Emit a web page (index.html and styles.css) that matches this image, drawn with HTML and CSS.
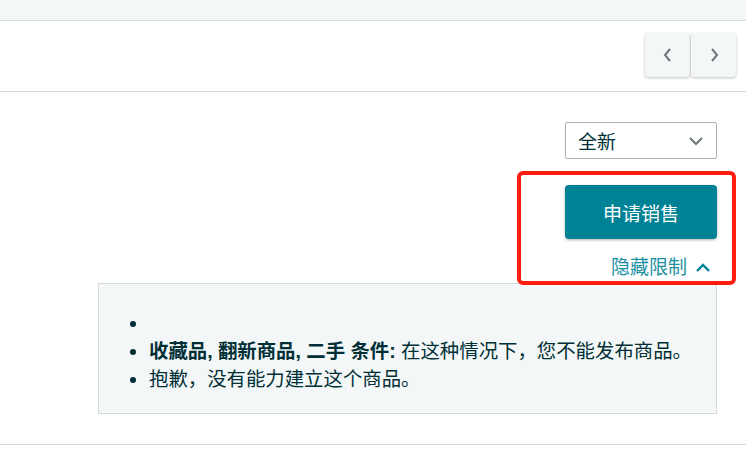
FILE: index.html
```html
<!DOCTYPE html>
<html lang="zh-CN">
<head>
    <meta charset="UTF-8">
    <meta name="viewport" content="width=device-width, initial-scale=1.0">
    <title>申请销售</title>
    <link rel="stylesheet" href="styles.css">
</head>
<body>
    <div class="top-band"></div>

    <div class="nav-row">
        <div class="pager">
            <button class="pager-btn" aria-label="上一页">
                <svg width="14" height="16" viewBox="0 0 14 16"><polyline points="9,2 4,8 9,14" fill="none" stroke="#6c7778" stroke-width="2"/></svg>
            </button>
            <button class="pager-btn" aria-label="下一页">
                <svg width="14" height="16" viewBox="0 0 14 16"><polyline points="5,2 10,8 5,14" fill="none" stroke="#6c7778" stroke-width="2"/></svg>
            </button>
        </div>
    </div>

    <div class="offer">
        <div class="actions">
            <div class="select">
                <span>全新</span>
                <svg width="16" height="10" viewBox="0 0 16 10"><polyline points="2,2 8,8 14,2" fill="none" stroke="#6c7778" stroke-width="2"/></svg>
            </div>
            <button class="apply-btn">申请销售</button>
            <a class="toggle-link" href="#">隐藏限制
                <svg width="16" height="10" viewBox="0 0 16 10"><polyline points="2,8 8,2 14,8" fill="none" stroke="#008296" stroke-width="2.4"/></svg>
            </a>
        </div>

        <div class="limits">
            <ul>
                <li></li>
                <li><b>收藏品, 翻新商品, 二手 条件:</b> 在这种情况下，您不能发布商品。</li>
                <li>抱歉，没有能力建立这个商品。</li>
            </ul>
        </div>

        <div class="highlight"></div>
    </div>
</body>
</html>
```

FILE: styles.css
```css
body {
    margin: 0;
    font-family: "Liberation Sans", "Noto Sans CJK SC", sans-serif;
    font-size: 19px;
    color: #002f36;
    background: #fff;
}
.top-band {
    height: 20px;
    background: #f4f7f8;
    border-bottom: 1px solid #d5d9d9;
}
.nav-row {
    height: 71px;
    border-bottom: 1px solid #d5d9d9;
    display: flex;
    justify-content: flex-end;
    align-items: flex-start;
    padding: 12px 10px 0 0;
    box-sizing: border-box;
}
.pager {
    display: flex;
    gap: 1px;
}
.pager-btn {
    width: 45px;
    height: 44px;
    border: none;
    border-radius: 4px;
    background: #f4f7f8;
    box-shadow: 0 1px 3px rgba(0, 0, 0, 0.25);
    display: flex;
    align-items: center;
    justify-content: center;
    padding: 0;
    cursor: pointer;
}
.offer {
    position: relative;
    height: 353px;
    border-bottom: 1px solid #d5d9d9;
    box-sizing: border-box;
    padding-top: 30px;
}
.actions {
    width: 152px;
    margin-left: 565px;
    display: flex;
    flex-direction: column;
    align-items: stretch;
}
.select {
    height: 37px;
    box-sizing: border-box;
    border: 1px solid #a6b2b3;
    border-radius: 2px;
    display: flex;
    align-items: center;
    justify-content: space-between;
    padding: 0 12px 0 12px;
    color: #002f36;
}
.apply-btn {
    margin-top: 26px;
    height: 54px;
    border: none;
    border-radius: 4px;
    background: #008296;
    color: #fff;
    font-family: inherit;
    font-size: 19px;
    box-shadow: 0 1px 3px rgba(0, 0, 0, 0.3);
    cursor: pointer;
}
.toggle-link {
    margin-top: 18px;
    align-self: flex-end;
    margin-right: 6px;
    color: #1a8fa3;
    text-decoration: none;
    display: flex;
    align-items: center;
    gap: 8px;
    line-height: 22px;
}
.limits {
    margin: 4px 29px 0 98px;
    height: 131px;
    box-sizing: border-box;
    background: #f4f7f8;
    border: 1px solid #d5d9d9;
    padding-top: 25px;
    font-size: 19.4px;
}
.limits ul {
    margin: 0;
    padding-left: 50px;
    line-height: 28px;
}
.limits li {
    min-height: 28px;
}
.limits b {
    font-weight: bold;
}
.highlight {
    position: absolute;
    left: 517px;
    top: 79px;
    width: 219px;
    height: 114px;
    box-sizing: border-box;
    border: 4px solid #ff1d10;
    border-radius: 6px;
    pointer-events: none;
}
```
